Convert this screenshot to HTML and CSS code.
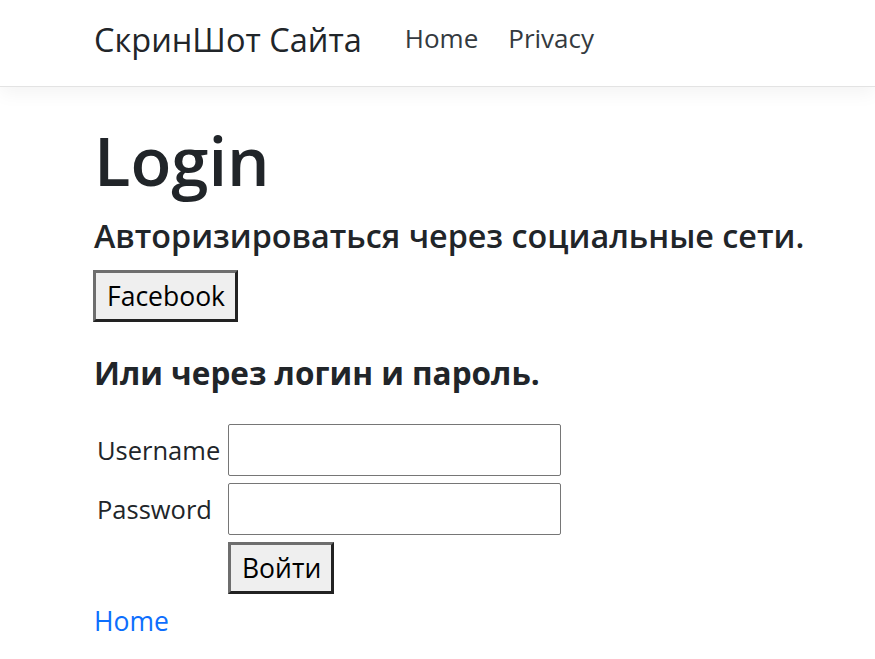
FILE: index.html
```html
<!DOCTYPE html>
<html lang="ru">
<head>
<meta charset="utf-8">
<title>Login - СкринШот Сайта</title>
<link rel="stylesheet" href="styles.css">
</head>
<body>
<header class="navbar">
  <div class="container nav-inner">
    <a class="brand" href="#">СкринШот Сайта</a>
    <nav class="nav-links">
      <a class="nav-link" href="#">Home</a>
      <a class="nav-link" href="#">Privacy</a>
    </nav>
  </div>
</header>
<main class="container main">
  <h1 class="title">Login</h1>
  <h3 class="social-title">Авторизироваться через социальные сети.</h3>
  <button class="btn btn-social" type="button">Facebook</button>
  <h4 class="or-title">Или через логин и пароль.</h4>
  <table class="login-table">
    <tr>
      <td class="label-cell"><label for="username">Username</label></td>
      <td><input class="field" id="username" type="text"></td>
    </tr>
    <tr>
      <td class="label-cell"><label for="password">Password</label></td>
      <td><input class="field" id="password" type="password"></td>
    </tr>
    <tr>
      <td></td>
      <td><button class="btn" type="submit">Войти</button></td>
    </tr>
  </table>
  <a class="home-link" href="#">Home</a>
</main>
</body>
</html>
```

FILE: styles.css
```css
html, body {
  margin: 0;
  padding: 0;
  background: #fff;
}
body {
  font-family: "Open Sans", "Noto Sans", sans-serif;
  font-size: 26px;
  color: #212529;
}
.container {
  padding-left: 94px;
  padding-right: 24px;
}
.navbar {
  height: 87px;
  border-bottom: 1px solid #e3e3e3;
  box-shadow: 0 6px 18px rgba(0, 0, 0, 0.05);
  background: #fff;
  box-sizing: border-box;
}
.nav-inner {
  display: flex;
  align-items: center;
  height: 100%;
  padding-bottom: 8px;
  box-sizing: border-box;
}
.brand {
  font-size: 32.5px;
  color: #212529;
  text-decoration: none;
  margin-right: 43px;
  line-height: 1.2;
}
.nav-links {
  display: flex;
  gap: 30px;
}
.nav-link {
  color: #343a40;
  text-decoration: none;
  font-size: 26px;
  line-height: 1.2;
}
.main {
  padding-top: 31px;
}
.title {
  font-size: 67px;
  font-weight: 600;
  line-height: 84px;
  margin: 0 0 14px 0;
}
.social-title {
  font-size: 32.3px;
  font-weight: 600;
  line-height: 38px;
  margin: 0 0 16px 0;
}
.btn {
  display: block;
  font-family: inherit;
  font-size: 26.5px;
  color: #000;
  background: #efefef;
  border: 3px solid;
  border-color: #6e6e6e #222 #222 #6e6e6e;
  padding: 4px 10px 4px 11px;
  line-height: 38px;
  margin: 0;
}
.btn-social {
  margin-left: -1px;
}
.or-title {
  font-size: 31.5px;
  font-weight: 700;
  line-height: 38px;
  margin: 32px 0 25px 0;
}
.login-table {
  border-collapse: separate;
  border-spacing: 3px 7px;
  margin: 0;
}
.login-table td {
  padding: 0;
}
.label-cell {
  width: 128px;
  font-size: 25.5px;
}
.field {
  display: block;
  width: 333px;
  height: 52px;
  box-sizing: border-box;
  border: 1.5px solid #767676;
  border-radius: 2px;
  margin: 0;
  font-size: 21px;
}
.home-link {
  display: inline-block;
  color: #0d6efd;
  text-decoration: none;
  font-size: 26.5px;
  line-height: 40px;
}
```
